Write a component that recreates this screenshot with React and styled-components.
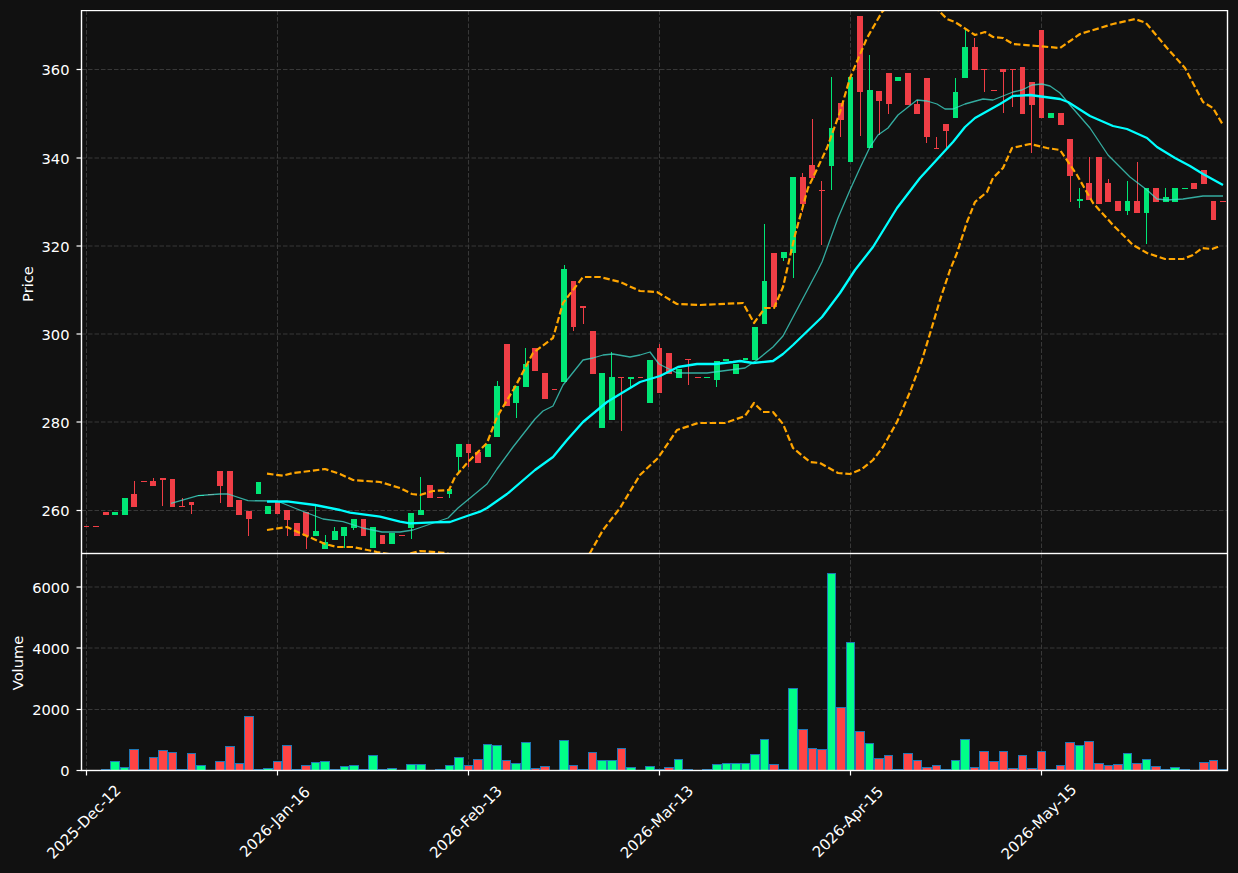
import React from 'react';
import styled, { createGlobalStyle } from 'styled-components';

const GlobalStyle = createGlobalStyle`
  html, body {
    margin: 0;
    padding: 0;
    background: #111111;
  }
`;

// plot area in page pixels
const LEFT = 81.5;
const RIGHT = 1227.5;
const TOP = 10.5;
const MID = 553.5;
const BASE = 770.5;
const BAR_STEP = 9.55;
const FIRST_BAR = 86.5;

const barX = i => FIRST_BAR + BAR_STEP * i;

// dir (g/r), wick top, body top, body bottom, wick bottom, volume height
const BARS = [
  ['r', 526, 526, 526.6, 526, 0], ['r', 526, 526, 526.6, 526, 0], ['r', 512, 512, 515, 515, 0.8],
  ['g', 512, 512, 515, 515, 9.3], ['g', 498, 498, 515, 515, 2.7], ['r', 481, 494, 507, 507, 20.7],
  ['r', 481, 481, 481.7, 481, 1.3], ['r', 478, 481, 486, 486, 12.7], ['r', 478, 478, 480, 506, 19.7],
  ['r', 479, 479, 507, 507, 17.7], ['r', 498, 506, 507, 507, 1.3], ['r', 502, 502, 505, 514, 16.7],
  ['g', 495, 495, 495.7, 495, 5.3], ['r', 494, 494, 494.7, 494, 0], ['r', 471, 471, 486, 503, 8.7],
  ['r', 471, 471, 507, 507, 23.7], ['r', 500, 500, 515, 515, 6.7], ['r', 511, 511, 519, 536, 53.7],
  ['g', 482, 482, 494, 494, 0.8], ['g', 506, 506, 514, 514, 2.3], ['r', 502, 502, 514, 514, 8.7],
  ['r', 510, 510, 520, 536, 24.7], ['r', 523, 523, 536, 536, 1.3], ['r', 512, 512, 536, 549, 5.3],
  ['g', 506, 531, 536, 536, 8.3], ['g', 535, 542, 549, 549, 9.3], ['g', 527, 531, 540, 540, 0.8],
  ['g', 527, 527, 536, 548, 4.3], ['g', 519, 519, 528, 530, 5.3], ['r', 519, 519, 536, 536, 0.8],
  ['g', 527, 527, 548, 548, 15.3], ['r', 535, 535, 544, 544, 1.3], ['g', 533, 533, 544, 544, 2.3],
  ['r', 535, 535, 535.7, 535, 0], ['g', 513, 513, 528, 539, 6.3], ['g', 477, 510, 515, 515, 6.3],
  ['r', 485, 485, 498, 498, 0], ['r', 497, 497, 497.7, 497, 0.8], ['g', 489, 489, 494, 498, 5.3],
  ['g', 444, 444, 457, 472, 13.3], ['r', 444, 444, 453, 467, 5.3], ['r', 452, 452, 463, 463, 11.3],
  ['g', 444, 444, 457, 457, 26.3], ['g', 381, 386, 437, 437, 25.3], ['r', 344, 344, 406, 406, 10.3],
  ['g', 386, 386, 403, 418, 7.3], ['g', 348, 364, 387, 387, 28.3], ['r', 348, 348, 371, 371, 2.3],
  ['r', 373, 373, 399, 399, 4.3], ['r', 389, 389, 389.7, 389, 0], ['g', 265, 269, 382, 382, 30.3],
  ['r', 281, 281, 327, 331, 5.3], ['r', 306, 306, 308, 324, 1.3], ['r', 331, 331, 374, 374, 18.3],
  ['g', 373, 373, 428, 428, 10.3], ['g', 352, 377, 420, 420, 10.3], ['r', 377, 377, 378, 431, 22.3],
  ['g', 377, 377, 379, 388, 3.3], ['r', 377, 377, 377.7, 377, 0], ['g', 360, 360, 403, 403, 4.3],
  ['r', 344, 348, 393, 393, 1.3], ['r', 353, 353, 374, 374, 3.3], ['g', 369, 369, 378, 378, 11.3],
  ['r', 359, 359, 360, 385, 1.3], ['r', 377, 377, 377.7, 377, 0], ['g', 377, 377, 377.7, 377, 1.3],
  ['g', 361, 361, 380, 387, 6.3], ['g', 359, 359, 361, 361, 7.3], ['g', 364, 364, 374, 374, 7.3],
  ['g', 358, 358, 360, 360, 7.3], ['g', 327, 327, 360, 360, 16.3], ['g', 224, 281, 324, 324, 31.3],
  ['r', 253, 253, 307, 307, 6.3], ['g', 252, 252, 258, 261, 0.8], ['g', 177, 177, 253, 278, 82],
  ['r', 173, 177, 204, 212, 41.3], ['r', 119, 165, 178, 178, 22.3], ['r', 181, 190, 191, 245, 20.7],
  ['g', 77, 128, 166, 190, 197], ['r', 103, 103, 120, 137, 62.7], ['g', 77, 77, 162, 162, 128],
  ['r', 16, 16, 92, 136, 39.3], ['g', 55, 90, 148, 148, 27.3], ['r', 91, 91, 101, 135, 12.3],
  ['r', 73, 73, 104, 114, 15.3], ['g', 77, 77, 81, 81, 0.8], ['r', 73, 73, 105, 105, 17.3],
  ['r', 100, 104, 114, 114, 10.3], ['r', 78, 78, 137, 143, 3.3], ['r', 137, 148, 148.7, 148.7, 5.3],
  ['r', 124, 124, 131, 148, 1.3], ['g', 78, 92, 118, 118, 10.3], ['g', 30, 47, 78, 78, 31.3],
  ['r', 38, 47, 70, 70, 3.3], ['r', 69, 69, 70, 92, 19.3], ['r', 90, 90, 90.7, 90, 9.3],
  ['r', 69, 69, 72, 113, 19.3], ['r', 69, 69, 69.7, 107, 2.3], ['r', 67, 67, 114, 114, 15.3],
  ['r', 82, 82, 105, 153, 2.3], ['r', 30, 30, 118, 118, 19.3], ['g', 113, 113, 118, 118, 0.8],
  ['r', 113, 113, 125, 125, 5.3], ['r', 139, 139, 176, 202, 28.3], ['g', 188, 199, 201, 208, 25.3],
  ['r', 157, 183, 200, 200, 29.3], ['r', 157, 157, 204, 204, 7.3], ['r', 179, 183, 202, 202, 5.3],
  ['r', 201, 201, 211, 211, 6.3], ['g', 181, 201, 211, 215, 17.3], ['r', 162, 201, 213, 213, 7.3],
  ['g', 188, 188, 213, 244, 11.3], ['r', 188, 188, 202, 202, 4.3], ['g', 188, 197, 202, 202, 1.3],
  ['g', 188, 188, 202, 202, 3.3], ['g', 188, 188, 188.7, 188, 1.3], ['r', 183, 183, 189, 189, 0],
  ['r', 170, 170, 184, 184, 8.3], ['r', 201, 201, 220, 220, 10.3], ['r', 201, 201, 201.7, 201, 1.3],
];

const CYAN_LINE = [
  [267, 501.7], [287, 501.4], [315, 505], [340, 510], [350, 512.7], [380, 516.7], [400, 521.7], [410, 523.3],
  [433, 522.3], [450, 522], [467, 516], [480, 511.7], [487, 508], [507, 494], [535, 470], [553, 457],
  [567, 440], [583, 422], [607, 402], [640, 382], [660, 376], [678, 367], [697, 364], [715, 364],
  [733, 362], [740, 361], [753, 363], [773, 361], [783, 354], [793, 345], [822, 317], [840, 293],
  [855, 270], [873, 247], [897, 208], [920, 178], [953, 142], [965, 127], [975, 118], [1000, 104],
  [1013, 96], [1030, 95], [1060, 99], [1068, 102], [1090, 116], [1113, 126], [1127, 129], [1147, 138],
  [1157, 147], [1175, 158], [1190, 166], [1203, 174], [1223, 185],
];

const TEAL_LINE = [
  [171, 503.3], [198, 495.7], [220, 494], [228, 494], [248, 500.7], [277, 501], [297, 509], [323, 519],
  [343, 521.7], [363, 528], [382, 532], [400, 532], [413, 530], [448, 518], [458, 508], [487, 484],
  [497, 469], [513, 447], [535, 419], [543, 411], [553, 406], [563, 385], [583, 360], [593, 358],
  [603, 355], [613, 354], [630, 357], [640, 355], [650, 352], [659, 364], [677, 373], [707, 373],
  [745, 368], [757, 360], [773, 347], [783, 336], [818, 270], [822, 262], [838, 218], [850, 190],
  [860, 168], [870, 147], [878, 135], [888, 128], [898, 115], [917, 100], [927, 101], [937, 104],
  [945, 109], [953, 109], [965, 104], [983, 99], [993, 100], [1013, 92], [1022, 90], [1032, 85],
  [1042, 84], [1050, 86], [1060, 93], [1070, 105], [1090, 128], [1108, 155], [1130, 177], [1147, 190],
  [1157, 199], [1167, 200], [1183, 199], [1203, 196], [1223, 196],
];

const BAND_UPPER = [
  [267, 473.7], [283, 475.7], [293, 473], [310, 471], [325, 469], [340, 474], [353, 480], [380, 482],
  [400, 488], [412, 494], [420, 495], [433, 491], [449, 490], [455, 477], [468, 462], [487, 443],
  [497, 417], [515, 387], [533, 353], [553, 338], [563, 303], [583, 277], [600, 277], [620, 282],
  [640, 291], [657, 292], [677, 304], [700, 305], [743, 303], [754, 323], [765, 308], [774, 308],
  [783, 287], [795, 235], [808, 188], [827, 148], [840, 112], [850, 78], [867, 38], [882, 12],
  [900, -5], [925, -5], [940, 12], [947, 19], [955, 22], [975, 35], [985, 32], [993, 37],
  [1003, 38], [1013, 44], [1037, 46], [1060, 48], [1080, 34], [1113, 24], [1135, 19], [1146, 23],
  [1167, 48], [1185, 68], [1203, 102], [1213, 108], [1223, 125],
];

const BAND_LOWER = [
  [267, 530], [287, 527], [300, 533], [325, 544], [337, 547], [353, 547], [377, 552], [400, 556],
  [420, 551], [447, 553], [470, 570], [560, 590], [590, 553], [603, 530], [620, 508], [640, 475],
  [658, 458], [677, 430], [698, 423], [725, 423], [745, 416], [754, 403], [763, 412], [773, 412],
  [783, 424], [793, 448], [810, 462], [820, 463], [838, 473], [850, 474], [862, 469], [873, 460],
  [883, 447], [897, 422], [910, 392], [922, 360], [932, 327], [940, 300], [950, 270], [957, 253],
  [967, 222], [975, 202], [987, 192], [993, 178], [1003, 168], [1012, 148], [1030, 144], [1047, 148],
  [1060, 150], [1077, 175], [1093, 203], [1113, 225], [1133, 245], [1147, 253], [1165, 259], [1183, 259],
  [1193, 255], [1202, 248], [1212, 249], [1220, 246],
];

const PRICE_TICKS = [
  { label: '260', y: 510.5 },
  { label: '280', y: 422 },
  { label: '300', y: 334 },
  { label: '320', y: 246 },
  { label: '340', y: 158 },
  { label: '360', y: 69.5 },
];

const VOLUME_TICKS = [
  { label: '0', y: 770.5 },
  { label: '2000', y: 709.5 },
  { label: '4000', y: 648 },
  { label: '6000', y: 587 },
];

const DATE_TICKS = [
  { label: '2025-Dec-12', x: 86.5 },
  { label: '2026-Jan-16', x: 277.5 },
  { label: '2026-Feb-13', x: 468.5 },
  { label: '2026-Mar-13', x: 659.5 },
  { label: '2026-Apr-15', x: 850.5 },
  { label: '2026-May-15', x: 1041.5 },
];

const toPoints = line => line.map(p => p.join(',')).join(' ');

const Figure = styled.main`
  display: flex;
  flex-direction: column;
  width: 1238px;
  height: 873px;
  padding-top: 10px;
  box-sizing: border-box;
  background: #111111;
  overflow: hidden;
`;

const PricePanel = styled.svg`
  display: block;
  width: 1238px;
  height: 543px;
  flex: none;
`;

const VolumePanel = styled.svg`
  display: block;
  width: 1238px;
  height: 320px;
  flex: none;
`;

const Frame = styled.rect`
  fill: none;
  stroke: #ffffff;
  stroke-width: 1.4;
`;

const GridLine = styled.line`
  stroke: #383838;
  stroke-width: 1;
  stroke-dasharray: 4.5 2;
`;

const TickMark = styled.line`
  stroke: #ffffff;
  stroke-width: 1.2;
`;

const TickLabel = styled.text`
  fill: #ffffff;
  font-family: 'DejaVu Sans', sans-serif;
  font-size: 14.67px;
  text-anchor: end;
  dominant-baseline: central;
`;

const DateLabel = styled.text`
  fill: #ffffff;
  font-family: 'DejaVu Sans', sans-serif;
  font-size: 15px;
  text-anchor: middle;
  dominant-baseline: central;
`;

const AxisTitle = styled.text`
  fill: #ffffff;
  font-family: 'DejaVu Sans', sans-serif;
  font-size: 14.67px;
  text-anchor: middle;
  dominant-baseline: central;
`;

const Wick = styled.line`
  stroke: ${props => (props.$up ? '#00e676' : '#f03e46')};
  stroke-width: 1;
  shape-rendering: crispEdges;
`;

const Body = styled.rect`
  fill: ${props => (props.$up ? '#00e676' : '#f03e46')};
  shape-rendering: crispEdges;
`;

const VolumeBar = styled.rect`
  fill: ${props => (props.$up ? '#00ff88' : '#ff4444')};
  stroke: #1f77b4;
  stroke-width: 1;
`;

const Curve = styled.polyline`
  fill: none;
  stroke: ${props => props.$color};
  stroke-width: ${props => props.$width};
  stroke-opacity: ${props => props.$opacity || 1};
  stroke-dasharray: ${props => props.$dash || 'none'};
  stroke-linejoin: round;
`;

const Grid = ({ ticks, top, bottom }) => (
  <g>
    {DATE_TICKS.map(t => (
      <GridLine key={t.label} x1={t.x} x2={t.x} y1={top} y2={bottom} />
    ))}
    {ticks.map(t => (
      <GridLine key={t.label} x1={LEFT} x2={RIGHT} y1={t.y} y2={t.y} />
    ))}
  </g>
);

const YAxis = ({ ticks }) => (
  <g>
    {ticks.map(t => (
      <g key={t.label}>
        <TickMark x1={LEFT - 5} x2={LEFT} y1={t.y} y2={t.y} />
        <TickLabel x={LEFT - 12} y={t.y}>
          {t.label}
        </TickLabel>
      </g>
    ))}
  </g>
);

const Candles = () =>
  BARS.map((bar, i) => {
    const [dir, wickTop, bodyTop, bodyBottom, wickBottom] = bar;
    const x = barX(i);
    const up = dir === 'g';
    return (
      <g key={i}>
        <Wick $up={up} x1={x} x2={x} y1={wickTop} y2={wickBottom} />
        <Body $up={up} x={x - 2.9} width={5.8} y={bodyTop} height={bodyBottom - bodyTop} />
      </g>
    );
  });

// snapped to half pixels so the 1px edge stays sharp, neighbours touch
const VolumeBars = () =>
  BARS.map((bar, i) => {
    const height = bar[5];
    if (!height) return null;
    const x = barX(i);
    const left = Math.round(x - BAR_STEP / 2) + 0.5;
    const right = Math.round(x + BAR_STEP / 2) - 0.5;
    const top = Math.floor(BASE - height) + 0.5;
    return <VolumeBar key={i} $up={bar[0] === 'g'} x={left} width={right - left} y={top} height={BASE - top} />;
  });

const App = () => (
  <>
    <GlobalStyle />
    <Figure>
      <PricePanel viewBox="0 10 1238 543">
        <defs>
          <clipPath id="price-clip">
            <rect x={LEFT} y={TOP} width={RIGHT - LEFT} height={MID - TOP} />
          </clipPath>
        </defs>
        <AxisTitle x={27} y={284} transform="rotate(-90 27 284)">
          Price
        </AxisTitle>
        <Grid ticks={PRICE_TICKS} top={TOP} bottom={MID} />
        <g clipPath="url(#price-clip)">
          <Candles />
          <Curve points={toPoints(TEAL_LINE)} $color="#40e0d0" $width={1.3} $opacity={0.75} />
          <Curve points={toPoints(CYAN_LINE)} $color="#00ffff" $width={2.3} />
          <Curve points={toPoints(BAND_UPPER)} $color="#ffa500" $width={2.2} $dash="6.5 2.8" />
          <Curve points={toPoints(BAND_LOWER)} $color="#ffa500" $width={2.2} $dash="6.5 2.8" />
        </g>
        <YAxis ticks={PRICE_TICKS} />
        <Frame x={LEFT} y={TOP} width={RIGHT - LEFT} height={MID - TOP} />
      </PricePanel>
      <VolumePanel viewBox="0 553 1238 320">
        <defs>
          <clipPath id="volume-clip">
            <rect x={LEFT} y={MID} width={RIGHT - LEFT} height={BASE - MID} />
          </clipPath>
        </defs>
        <AxisTitle x={17} y={663} transform="rotate(-90 17 663)">
          Volume
        </AxisTitle>
        <Grid ticks={VOLUME_TICKS} top={MID} bottom={BASE} />
        <g clipPath="url(#volume-clip)">
          <VolumeBars />
        </g>
        <YAxis ticks={VOLUME_TICKS} />
        {DATE_TICKS.map(t => (
          <g key={t.label}>
            <TickMark x1={t.x} x2={t.x} y1={BASE} y2={BASE + 5} />
            <DateLabel x={t.x - 2.5} y={822} transform={`rotate(-45 ${t.x - 2.5} 822)`}>
              {t.label}
            </DateLabel>
          </g>
        ))}
        <Frame x={LEFT} y={MID} width={RIGHT - LEFT} height={BASE - MID} />
      </VolumePanel>
    </Figure>
  </>
);

export default App;
